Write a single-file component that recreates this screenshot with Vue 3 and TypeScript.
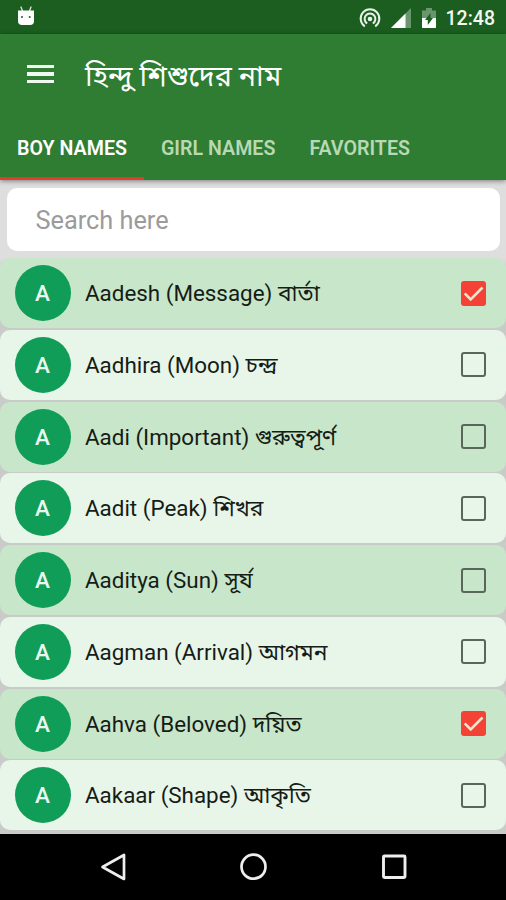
<script setup lang="ts">
import { ref } from 'vue'

interface NameEntry {
  name: string
  meaning: string
  bengali: string
  favorite: boolean
}

const tabs = ['BOY NAMES', 'GIRL NAMES', 'FAVORITES']
const activeTab = ref(0)
const query = ref('')
const names = ref<NameEntry[]>([
  { name: 'Aadesh', meaning: 'Message', bengali: 'বার্তা', favorite: true },
  { name: 'Aadhira', meaning: 'Moon', bengali: 'চন্দ্র', favorite: false },
  { name: 'Aadi', meaning: 'Important', bengali: 'গুরুত্বপূর্ণ', favorite: false },
  { name: 'Aadit', meaning: 'Peak', bengali: 'শিখর', favorite: false },
  { name: 'Aaditya', meaning: 'Sun', bengali: 'সূর্য', favorite: false },
  { name: 'Aagman', meaning: 'Arrival', bengali: 'আগমন', favorite: false },
  { name: 'Aahva', meaning: 'Beloved', bengali: 'দয়িত', favorite: true },
  { name: 'Aakaar', meaning: 'Shape', bengali: 'আকৃতি', favorite: false },
])
</script>

<template>
  <div class="screen">
    <div class="status">
      <svg class="droid" width="18" height="20" viewBox="0 0 18 20">
        <path d="M4 1l1.500 4M14 1l-1.500 4" stroke="#dcebdc" stroke-width="1.300" stroke-linecap="round" />
        <path d="M1 4.500h16v10.500a4 4 0 0 1-4 4H5a4 4 0 0 1-4-4z" fill="#fff" />
        <circle cx="5" cy="11" r="1" fill="#1b5e20" />
        <circle cx="12.700" cy="11" r="1" fill="#1b5e20" />
      </svg>
      <div class="status-right">
        <svg class="hotspot" width="22" height="22" viewBox="0 0 22 22" fill="none" stroke="#e8f1e8" stroke-width="2">
          <circle cx="11" cy="12" r="2.300" fill="#e8f1e8" stroke="none" />
          <path d="M5.800 19.300a9.300 9.300 0 1 1 10.400 0" />
          <path d="M8.200 16.500a5.400 5.400 0 1 1 5.600 0" />
        </svg>
        <svg class="signal" width="20" height="20" viewBox="0 0 20 20">
          <path d="M0 20L20 0V20z" fill="#fff" opacity=".35" />
          <path d="M0 20L14.500 5.500V20z" fill="#fff" />
        </svg>
        <svg class="battery" width="14" height="20" viewBox="0 0 14 20">
          <path d="M4 0h6v2.500h4V20H0V2.500h4z" fill="#fff" opacity=".35" />
          <path d="M0 10h14v9a1 1 0 0 1-1 1H1a1 1 0 0 1-1-1z" fill="#fff" />
          <path d="M8.500 5v5H11L5.800 17v-5H3z" fill="#1b5e20" />
        </svg>
        <span class="clock">12:48</span>
      </div>
    </div>

    <header class="header">
      <div class="toolbar">
        <button class="menu" aria-label="Menu"><i></i><i></i><i></i></button>
        <h1 class="title">হিন্দু শিশুদের নাম</h1>
      </div>
      <nav class="tabs">
        <button
          v-for="(tab, i) in tabs"
          :key="tab"
          class="tab"
          :class="{ active: i === activeTab }"
          @click="activeTab = i"
        >{{ tab }}</button>
      </nav>
    </header>

    <main class="content">
      <input v-model="query" class="search" type="text" placeholder="Search here" />
      <ul class="list">
        <li v-for="entry in names" :key="entry.name" class="row">
          <span class="avatar">{{ entry.name[0] }}</span>
          <span class="label">{{ entry.name }} ({{ entry.meaning }}) <span class="bengali">{{ entry.bengali }}</span></span>
          <button class="check" :class="{ on: entry.favorite }" aria-label="Favorite" @click="entry.favorite = !entry.favorite">
            <svg v-if="entry.favorite" width="25" height="25" viewBox="0 0 25 25">
              <path d="M3.700 12.300l6 6L21.500 6.500" fill="none" stroke="#f3e3c8" stroke-width="2.600" />
            </svg>
          </button>
        </li>
      </ul>
    </main>

    <footer class="navbar">
      <svg width="28" height="30" viewBox="0 0 28 30"><path d="M25 3V27L3.500 15z" fill="none" stroke="#eee" stroke-width="2.700" stroke-linejoin="round" /></svg>
      <svg width="28" height="30" viewBox="0 0 28 30"><circle cx="14.500" cy="14.700" r="12" fill="none" stroke="#eee" stroke-width="2.700" /></svg>
      <svg width="28" height="30" viewBox="0 0 28 30"><rect x="3.500" y="4" width="21.500" height="21.500" rx="1" fill="none" stroke="#eee" stroke-width="2.900" /></svg>
    </footer>
  </div>
</template>

<style>
body { margin: 0; }
</style>

<style scoped>
.screen {
  box-sizing: border-box;
  width: 506px;
  height: 900px;
  display: flex;
  flex-direction: column;
  overflow: hidden;
  font-family: Roboto, "Noto Sans Bengali", "Noto Sans", sans-serif;
  background: #dedede;
}
button { border: 0; padding: 0; background: none; font: inherit; color: inherit; }
.status {
  height: 34px;
  flex: none;
  box-sizing: border-box;
  display: flex;
  justify-content: space-between;
  padding: 0 11px 0 17px;
  background: #1b5e20;
  color: #fff;
}
.droid { margin-top: 6px; }
.status-right { display: flex; }
.hotspot { margin: 7px 10px 0 0; }
.signal { margin: 7.500px 11px 0 0; }
.battery { margin: 7.500px 10px 0 0; }
.clock { font-size: 19.500px; line-height: 37px; font-weight: 500; color: #f3f8f3; }
.header {
  position: relative;
  z-index: 1;
  height: 146px;
  flex: none;
  display: flex;
  flex-direction: column;
  background: #2e7d32;
  box-shadow: 0 1px 5px rgba(0, 0, 0, .45);
}
.toolbar { height: 80px; display: flex; align-items: center; padding-left: 26.500px; }
.menu { width: 27px; display: flex; flex-direction: column; gap: 4px; }
.menu i { height: 3.500px; background: #f1f7f1; }
.title { margin: 0 0 0 31.500px; padding-top: 3px; font-size: 28.700px; line-height: 40px; font-weight: 400; color: #fff; white-space: nowrap; }
.tabs { flex: 1; display: flex; }
.tab {
  box-sizing: border-box;
  padding: 5px 17px 0;
  border-bottom: 3px solid transparent;
  font-size: 19.650px;
  font-weight: 600;
  color: #b9d8b4;
  white-space: nowrap;
}
.tab.active { color: #fff; border-bottom-color: #e53b2c; }
.content { flex: 1; min-height: 0; display: flex; flex-direction: column; }
.search {
  box-sizing: border-box;
  height: 63px;
  flex: none;
  margin: 7.500px 6.500px 7.500px 7px;
  padding: 3px 28.500px 0;
  border: 0;
  border-radius: 10px;
  outline: none;
  background: #fff;
  font: 25.300px Roboto, sans-serif;
}
.search::placeholder { color: #9b9b9b; opacity: 1; }
.list {
  margin: 0;
  padding: 0 0 4px;
  list-style: none;
  display: flex;
  flex-direction: column;
  gap: 1.750px;
  background: linear-gradient(#dedede, #c9cbc9 15px);
}
.row {
  box-sizing: border-box;
  height: 70px;
  flex: none;
  display: flex;
  align-items: center;
  padding: 0 20.500px 0 14.500px;
  border-radius: 10px;
  background: #c8e6c9;
}
.row:nth-child(even) { background: #e8f5e9; }
.avatar {
  width: 56px;
  height: 56px;
  flex: none;
  border-radius: 50%;
  background: #0f9d58;
  color: #e9f7ef;
  font-size: 22.500px;
  font-weight: 500;
  line-height: 57px;
  text-align: center;
}
.label { flex: 1; margin-left: 14.500px; padding-top: 1px; font-size: 22.400px; line-height: 32px; color: #161c16; white-space: nowrap; }
.bengali { font-size: 22.800px; }
.check { box-sizing: border-box; width: 25px; height: 25px; border: 2.400px solid #59665b; border-radius: 3px; }
.check.on { border: 0; background: #f44336; }
.check svg { display: block; }
.navbar {
  height: 66px;
  flex: none;
  display: flex;
  justify-content: center;
  align-items: center;
  gap: 112.500px;
  background: #000;
}
</style>
